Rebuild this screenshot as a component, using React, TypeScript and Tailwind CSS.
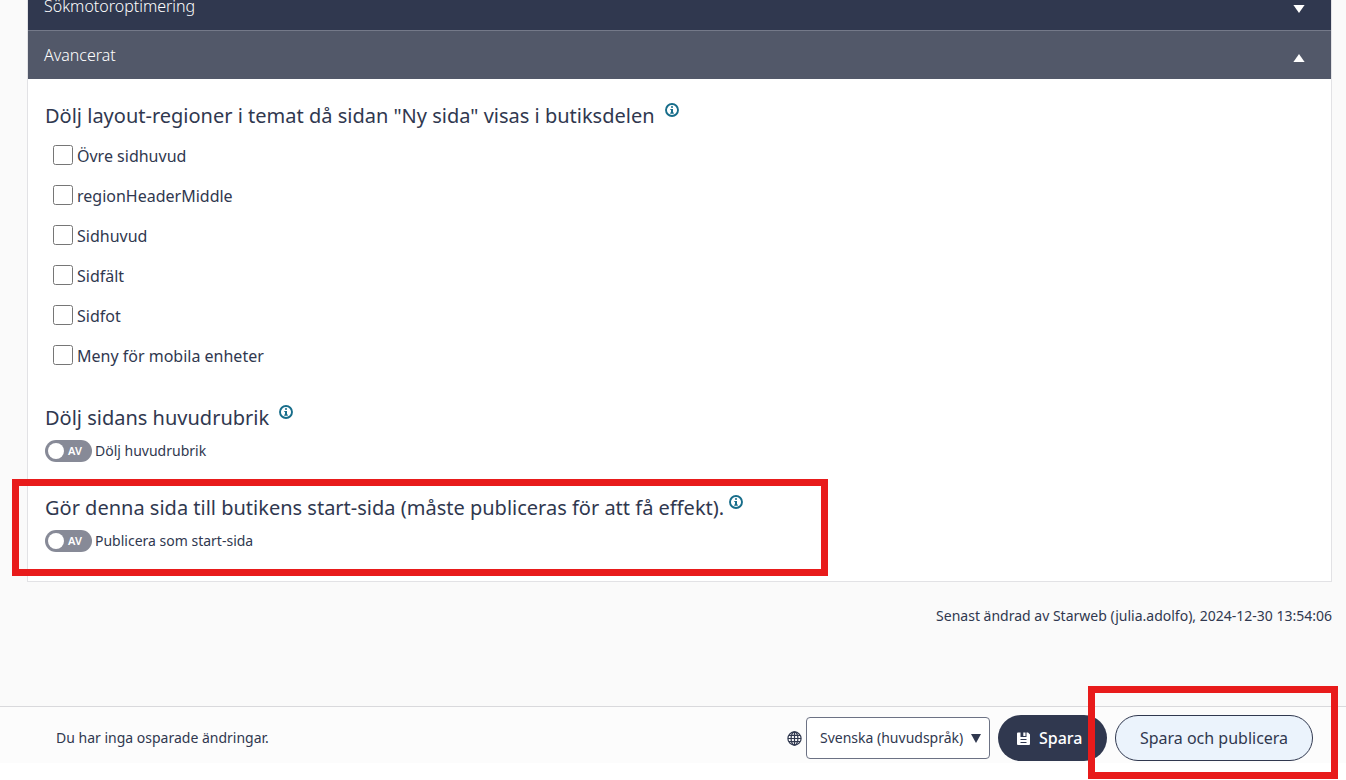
import { useState } from "react";
import type { ReactNode } from "react";

const regions = [
  "Övre sidhuvud",
  "regionHeaderMiddle",
  "Sidhuvud",
  "Sidfält",
  "Sidfot",
  "Meny för mobila enheter",
];

function InfoIcon() {
  return (
    <button type="button" aria-label="Information" className="-mt-3 flex h-[14px] w-[14px] items-center justify-center text-[#176d8a]">
      <svg viewBox="0 0 14 14" className="h-[14px] w-[14px]" fill="none">
        <circle cx="7" cy="7" r="6" stroke="currentColor" strokeWidth="1.9" />
        <path d="M6 3.200h2v1.600H6zM5.300 5.900H8v3.500h.8v1.300H5.200V9.400H6V7.100h-.7z" fill="currentColor" />
      </svg>
    </button>
  );
}

function Triangle({ up = false }: { up?: boolean }) {
  return (
    <svg viewBox="0 0 12 8" className="mt-[5px] mr-[10px] h-2 w-3" fill="currentColor">
      {up ? <path d="M6 0l5.600 8H.4z" /> : <path d="M.4 0h11.200L6 8z" />}
    </svg>
  );
}

function Heading({ children, gap }: { children: ReactNode; gap: string }) {
  return (
    <div className={`flex h-[30px] items-center ${gap}`}>
      <h2 className="text-xl">{children}</h2>
      <InfoIcon />
    </div>
  );
}

function Toggle({ id, label }: { id: string; label: string }) {
  const [on, setOn] = useState(false);
  return (
    <div className="mt-[3px] flex h-[30px] items-center gap-[3px]">
      <button
        id={id}
        type="button"
        role="switch"
        aria-checked={on}
        onClick={() => setOn(!on)}
        className={`flex h-[22px] w-[47px] items-center gap-1 rounded-full px-[3px] ${on ? "flex-row-reverse bg-[#176d8a]" : "bg-[#878a97]"}`}
      >
        <span className="h-4 w-4 rounded-full bg-white" />
        <span className="text-[11px] font-semibold text-white">{on ? "PÅ" : "AV"}</span>
      </button>
      <label htmlFor={id} className="text-sm">{label}</label>
    </div>
  );
}

function GlobeIcon() {
  return (
    <svg viewBox="0 0 15 15" className="h-[15px] w-[15px]" fill="none" stroke="currentColor" strokeWidth="1.200">
      <circle cx="7.500" cy="7.500" r="6.600" />
      <ellipse cx="7.500" cy="7.500" rx="3.400" ry="6.600" />
      <path d="M7.500 1v13M1 7.500h13M2 4.300h11M2 10.700h11" />
    </svg>
  );
}

function SaveIcon() {
  return (
    <svg viewBox="0 0 13 13" className="h-[13px] w-[13px]">
      <path d="M1 .5h2.500v4.500h6V.5H11l2 2V12a1 1 0 0 1-1 1H1a1 1 0 0 1-1-1V1.500a1 1 0 0 1 1-1z" fill="#fff" />
      <path d="M6.300 .5H8.500v3.500H6.300z" fill="#fff" />
      <path d="M3.500 7.500h6M3.500 10.500h6" stroke="#30384f" strokeWidth="1" />
    </svg>
  );
}

export default function App() {
  return (
    <div className="min-h-screen overflow-hidden bg-white font-['Noto_Sans',sans-serif] text-[#30384f]">
      <main className="bg-[#fafafa] pr-[14px] pb-20 pl-[27px]">
        <section className="-mt-[18px] border border-t-0 border-[#e2e2e5] bg-white">
          <button type="button" className="flex h-12 w-full items-center justify-between bg-[#30384f] px-4 font-light text-white">
            <span>Sökmotoroptimering</span>
            <Triangle />
          </button>
          <button type="button" aria-expanded="true" className="flex h-[49px] w-full items-center justify-between border-t border-[#747989] bg-[#525869] px-4 font-light text-white">
            <span>Avancerat</span>
            <Triangle up />
          </button>
          <div className="px-[17px] pt-[22px] pb-[25px]">
            <Heading gap="gap-[10px]">Dölj layout-regioner i temat då sidan "Ny sida" visas i butiksdelen</Heading>
            <div className="mt-[5px] pl-2">
              {regions.map((name) => (
                <label key={name} className="flex h-10 w-fit items-center gap-1">
                  <input type="checkbox" className="mb-[2px] h-5 w-5" />
                  {name}
                </label>
              ))}
            </div>
            <div className="mt-[27px]">
              <Heading gap="gap-[10px]">Dölj sidans huvudrubrik</Heading>
              <Toggle id="hide-heading" label="Dölj huvudrubrik" />
            </div>
            <div className="relative mt-[27px]">
              <Heading gap="gap-[5px]">Gör denna sida till butikens start-sida (måste publiceras för att få effekt).</Heading>
              <Toggle id="start-page" label="Publicera som start-sida" />
              <div className="pointer-events-none absolute -top-[14px] -left-[33px] h-[97px] w-[816px] border-[7px] border-[#e81b1b]" />
            </div>
          </div>
        </section>
        <p className="mt-6 text-right text-sm">Senast ändrad av Starweb (julia.adolfo), 2024-12-30 13:54:06</p>
      </main>
      <footer className="flex h-[57px] items-center justify-between border-t border-[#d9d9dc] bg-[#fcfcfc] pt-[6px] pr-[33px] pl-14">
        <p className="text-sm">Du har inga osparade ändringar.</p>
        <div className="flex items-center gap-2">
          <div className="flex items-center gap-1">
            <GlobeIcon />
            <div className="relative">
              <select aria-label="Språk" className="h-[42px] w-[184px] appearance-none rounded-[4px] border border-[#6c7284] bg-white pl-[13px] text-sm">
                <option>Svenska (huvudspråk)</option>
              </select>
              <svg viewBox="0 0 10 9" className="pointer-events-none absolute top-[17px] right-[9px] h-[9px] w-[10px]" fill="currentColor">
                <path d="M0 0h10L5 9z" />
              </svg>
            </div>
          </div>
          <button type="button" className="flex h-[46px] w-[109px] items-center gap-[9px] rounded-full bg-[#30384f] pl-[19px] font-medium text-white">
            <SaveIcon />
            Spara
          </button>
          <div className="relative">
            <button type="button" className="h-[46px] w-[198px] rounded-full border border-[#30384f] bg-[#ebf3fc]">
              Spara och publicera
            </button>
            <div className="pointer-events-none absolute -top-[29px] -left-[27px] h-[93px] w-[250px] border-[7px] border-[#e81b1b]" />
          </div>
        </div>
      </footer>
    </div>
  );
}
